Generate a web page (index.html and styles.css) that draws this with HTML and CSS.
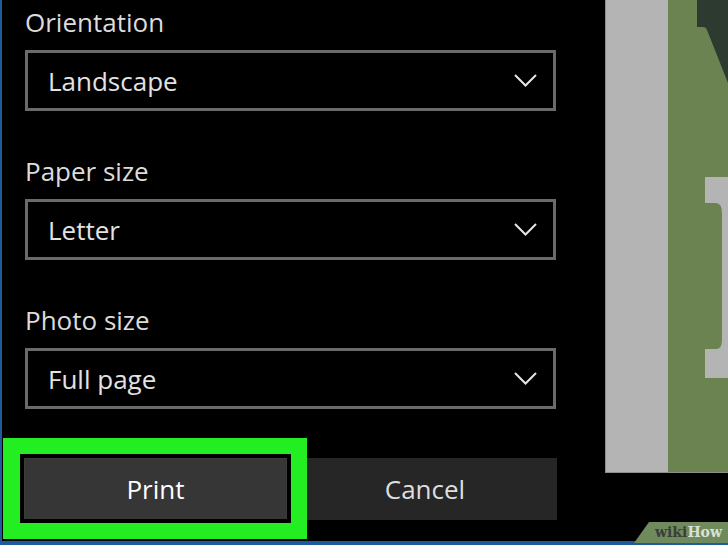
FILE: index.html
```html
<!DOCTYPE html>
<html>
<head>
<meta charset="utf-8">
<link rel="stylesheet" href="styles.css">
</head>
<body>
<div class="screen">
  <div class="panel">
    <div class="field">
      <div class="label">Orientation</div>
      <div class="select"><span class="value">Landscape</span><svg class="chev" viewBox="0 0 23 13"><polyline points="1,1 11.5,11.5 22,1"/></svg></div>
    </div>
    <div class="field">
      <div class="label">Paper size</div>
      <div class="select"><span class="value">Letter</span><svg class="chev" viewBox="0 0 23 13"><polyline points="1,1 11.5,11.5 22,1"/></svg></div>
    </div>
    <div class="field">
      <div class="label">Photo size</div>
      <div class="select"><span class="value">Full page</span><svg class="chev" viewBox="0 0 23 13"><polyline points="1,1 11.5,11.5 22,1"/></svg></div>
    </div>
    <div class="actions">
      <button class="btn btn-primary">Print</button>
      <button class="btn btn-secondary">Cancel</button>
    </div>
  </div>
  <div class="preview">
    <svg class="paper" viewBox="0 0 124 474" width="124" height="474">
      <rect x="0" y="0" width="124" height="474" fill="#000"/>
      <rect x="1" y="0" width="123" height="473" fill="#8d8d8d"/>
      <rect x="2" y="0" width="62" height="472" fill="#b4b4b4"/>
      <rect x="64" y="0" width="60" height="472" fill="#6a8350"/>
      <path d="M93 0 H124 V83 L103 30 Q102 27 99 27 H93 Z" fill="#2d3a2f"/>
      <path d="M101 177 H124 V378 H101 V349 H112 Q118 349 118 340 V214 Q118 203 112 203 H101 Z" fill="#b4b4b4"/>
    </svg>
  </div>
  <div class="highlight"></div>
</div>
<div class="badge"><span class="wiki">wiki</span><span class="how">How</span></div>
</body>
</html>
```
FILE: styles.css
```css
html, body {
  margin: 0;
  padding: 0;
  background: #000;
  width: 728px;
  height: 545px;
  overflow: hidden;
}

body {
  font-family: "Open Sans", "Noto Sans", sans-serif;
  position: relative;
}

.screen {
  position: relative;
  display: flex;
  width: 726px;
  height: 541px;
  border-left: 2px solid #1d5c9c;
  border-bottom: 4px solid #1d5c9c;
}

.panel {
  width: 579px;
  padding: 5px 0 0 23px;
  display: flex;
  flex-direction: column;
}

.field + .field {
  margin-top: 43px;
}

.label {
  font-size: 26px;
  line-height: 34px;
  height: 34px;
  color: #dcdcdc;
}

.select {
  margin-top: 11px;
  width: 531px;
  height: 61px;
  box-sizing: border-box;
  border: 3px solid #6a6a6a;
  display: flex;
  align-items: center;
  justify-content: space-between;
  padding: 0 16px 0 20px;
}

.value {
  font-size: 26px;
  color: #e2e2e2;
}

.chev {
  width: 23px;
  height: 13px;
  fill: none;
  stroke: #e6e6e6;
  stroke-width: 2;
}

.actions {
  margin-top: 49px;
  display: flex;
  gap: 6px;
}

.btn {
  height: 62px;
  border: 0;
  padding: 0;
  font-family: "Open Sans", "Noto Sans", sans-serif;
  font-size: 26px;
}

.btn-primary {
  width: 263px;
  margin-left: -1px;
  background: #363636;
  border: 1px solid #3c3c3c;
  color: #ffffff;
}

.btn-secondary {
  width: 264px;
  background: #262626;
  color: #dedede;
}

.preview {
  flex: none;
  width: 124px;
  height: 474px;
}

.paper {
  display: block;
}

.highlight {
  position: absolute;
  left: 1px;
  top: 438px;
  width: 304px;
  height: 101px;
  box-sizing: border-box;
  border-style: solid;
  border-color: #22ee22;
  border-width: 16px 16px 16px 17px;
  box-shadow: inset 0 0 0 4px #000;
}

.badge {
  position: absolute;
  right: 0;
  bottom: 2px;
  width: 94px;
  height: 21px;
  background: #6f8a5c;
  clip-path: polygon(15px 0, 100% 0, 100% 100%, 0 100%);
  box-sizing: border-box;
  padding-left: 21px;
  font-family: "DejaVu Serif", "Liberation Serif", serif;
  font-weight: bold;
  font-size: 14px;
  line-height: 20px;
  white-space: nowrap;
}

.wiki {
  color: #3a3f3a;
}

.how {
  color: #dde0d8;
}
```
